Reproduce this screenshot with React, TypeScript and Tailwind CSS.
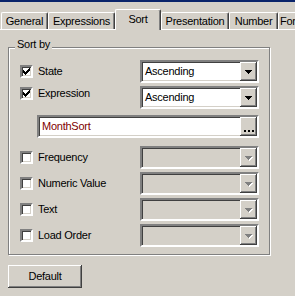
import React from 'react';

const sunken =
  'border-2 border-t-[#808080] border-l-[#808080] border-b-white border-r-white shadow-[inset_1px_1px_0_#404040,inset_-1px_-1px_0_#d4d0c8]';
const raised =
  'bg-[#d4d0c8] shadow-[inset_-1px_-1px_0_#404040,inset_1px_1px_0_#ffffff,inset_-2px_-2px_0_#808080,inset_2px_2px_0_#d4d0c8]';

type TabProps = { label: string; width: string; active?: boolean; start?: boolean };

function Tab({ label, width, active, start }: TabProps) {
  if (active) {
    return (
      <div
        className={`relative z-10 -mb-[1px] flex h-[21px] shrink-0 items-center justify-center rounded-t-[2px] border-l border-t border-r border-white border-r-[#404040] bg-[#d4d0c8] pb-[2px] shadow-[inset_-1px_0_0_#808080] ${width}`}
      >
        {label}
      </div>
    );
  }
  return (
    <div
      className={`flex h-[17px] shrink-0 items-center rounded-t-[2px] border-l border-t border-r border-white border-r-[#404040] shadow-[inset_-1px_0_0_#808080] ${start ? 'justify-start pl-[1px]' : 'justify-center'} ${width}`}
    >
      {label}
    </div>
  );
}

function Checkmark() {
  const cols = [2, 3, 4, 3, 2, 1, 0];
  return (
    <svg width="7" height="7" viewBox="0 0 7 7" shapeRendering="crispEdges">
      {cols.map((y, x) => (
        <rect key={x} x={x} y={y} width="1" height="3" fill="#000" />
      ))}
    </svg>
  );
}

function Check({ label, checked }: { label: string; checked?: boolean }) {
  return (
    <div className="flex h-[13px] items-center">
      <div className={`flex h-[13px] w-[13px] shrink-0 items-center justify-center bg-white ${sunken}`}>
        {checked && <Checkmark />}
      </div>
      <span className="ml-[5px] whitespace-nowrap leading-[13px]">{label}</span>
    </div>
  );
}

function Arrow({ disabled }: { disabled?: boolean }) {
  return (
    <svg width="8" height="5" viewBox="0 0 8 5" shapeRendering="crispEdges">
      {disabled && <path d="M1 1h7v1h-1v1h-1v1h-1v1h-1v-1h-1v-1h-1v-1h-1z" fill="#ffffff" />}
      <path d="M0 0h7v1h-1v1h-1v1h-1v1h-1v-1h-1v-1h-1v-1h-1z" fill={disabled ? '#808080' : '#000'} />
    </svg>
  );
}

function Combo({ value, disabled }: { value?: string; disabled?: boolean }) {
  return (
    <div className={`flex h-[23px] w-[119px] ${disabled ? 'bg-[#d4d0c8]' : 'bg-white'} ${sunken}`}>
      <div className="flex flex-1 items-center pl-[3px] leading-[13px]">{value}</div>
      <div className={`flex h-full w-[17px] items-center justify-center pl-[1px] pt-[1px] ${raised}`}>
        <Arrow disabled={disabled} />
      </div>
    </div>
  );
}

export default function App() {
  return (
    <div className="h-[296px] w-[295px] overflow-hidden bg-[#d4d0c8] font-['Liberation_Sans',Arial,sans-serif] text-[11px] tracking-[-0.25px] text-black">
      <div className="h-[2px] bg-[#0a246a]" />
      <div className="mt-[7px] flex h-[20px] items-end pl-[1px]">
        <Tab label="General" width="w-[47px]" />
        <Tab label="Expressions" width="w-[67px]" />
        <Tab label="Sort" width="w-[46px]" active />
        <Tab label="Presentation" width="w-[68px]" />
        <Tab label="Number" width="w-[49px]" />
        <Tab label="Font" width="w-[48px]" start />
      </div>
      <div className="border-t border-white">
        <div className="relative ml-[8px] mt-[17px] h-[208px] w-[262px] border border-[#808080] shadow-[1px_1px_0_#ffffff,inset_1px_1px_0_#ffffff]">
          <span className="absolute left-[6px] top-[-10px] bg-[#d4d0c8] px-[2px] leading-[13px]">Sort by</span>
          <div className="flex items-start">
            <div className="flex w-[131px] flex-col gap-[9px] pl-[11px] pt-[17px]">
              <Check label="State" checked />
              <Check label="Expression" checked />
            </div>
            <div className="flex flex-col gap-[3px] pt-[12px]">
              <Combo value="Ascending" />
              <Combo value="Ascending" />
            </div>
          </div>
          <div className={`ml-[28px] mt-[6px] flex h-[23px] w-[222px] bg-white ${sunken}`}>
            <div className="flex flex-1 items-center pl-[3px] leading-[13px] text-[#800000]">MonthSort</div>
            <div className={`flex h-full w-[17px] items-end justify-center gap-[2px] pb-[4px] ${raised}`}>
              <span className="h-[2px] w-[2px] bg-black" />
              <span className="h-[2px] w-[2px] bg-black" />
              <span className="h-[2px] w-[2px] bg-black" />
            </div>
          </div>
          <div className="mt-[8px] flex flex-col gap-[3px]">
            {['Frequency', 'Numeric Value', 'Text', 'Load Order'].map((label) => (
              <div key={label} className="flex h-[23px] items-center">
                <div className="w-[131px] pl-[11px]">
                  <Check label={label} />
                </div>
                <Combo disabled />
              </div>
            ))}
          </div>
        </div>
        <button
          className={`ml-[8px] mt-[10px] flex h-[23px] w-[74px] items-center justify-center leading-[13px] ${raised}`}
        >
          Default
        </button>
      </div>
    </div>
  );
}
